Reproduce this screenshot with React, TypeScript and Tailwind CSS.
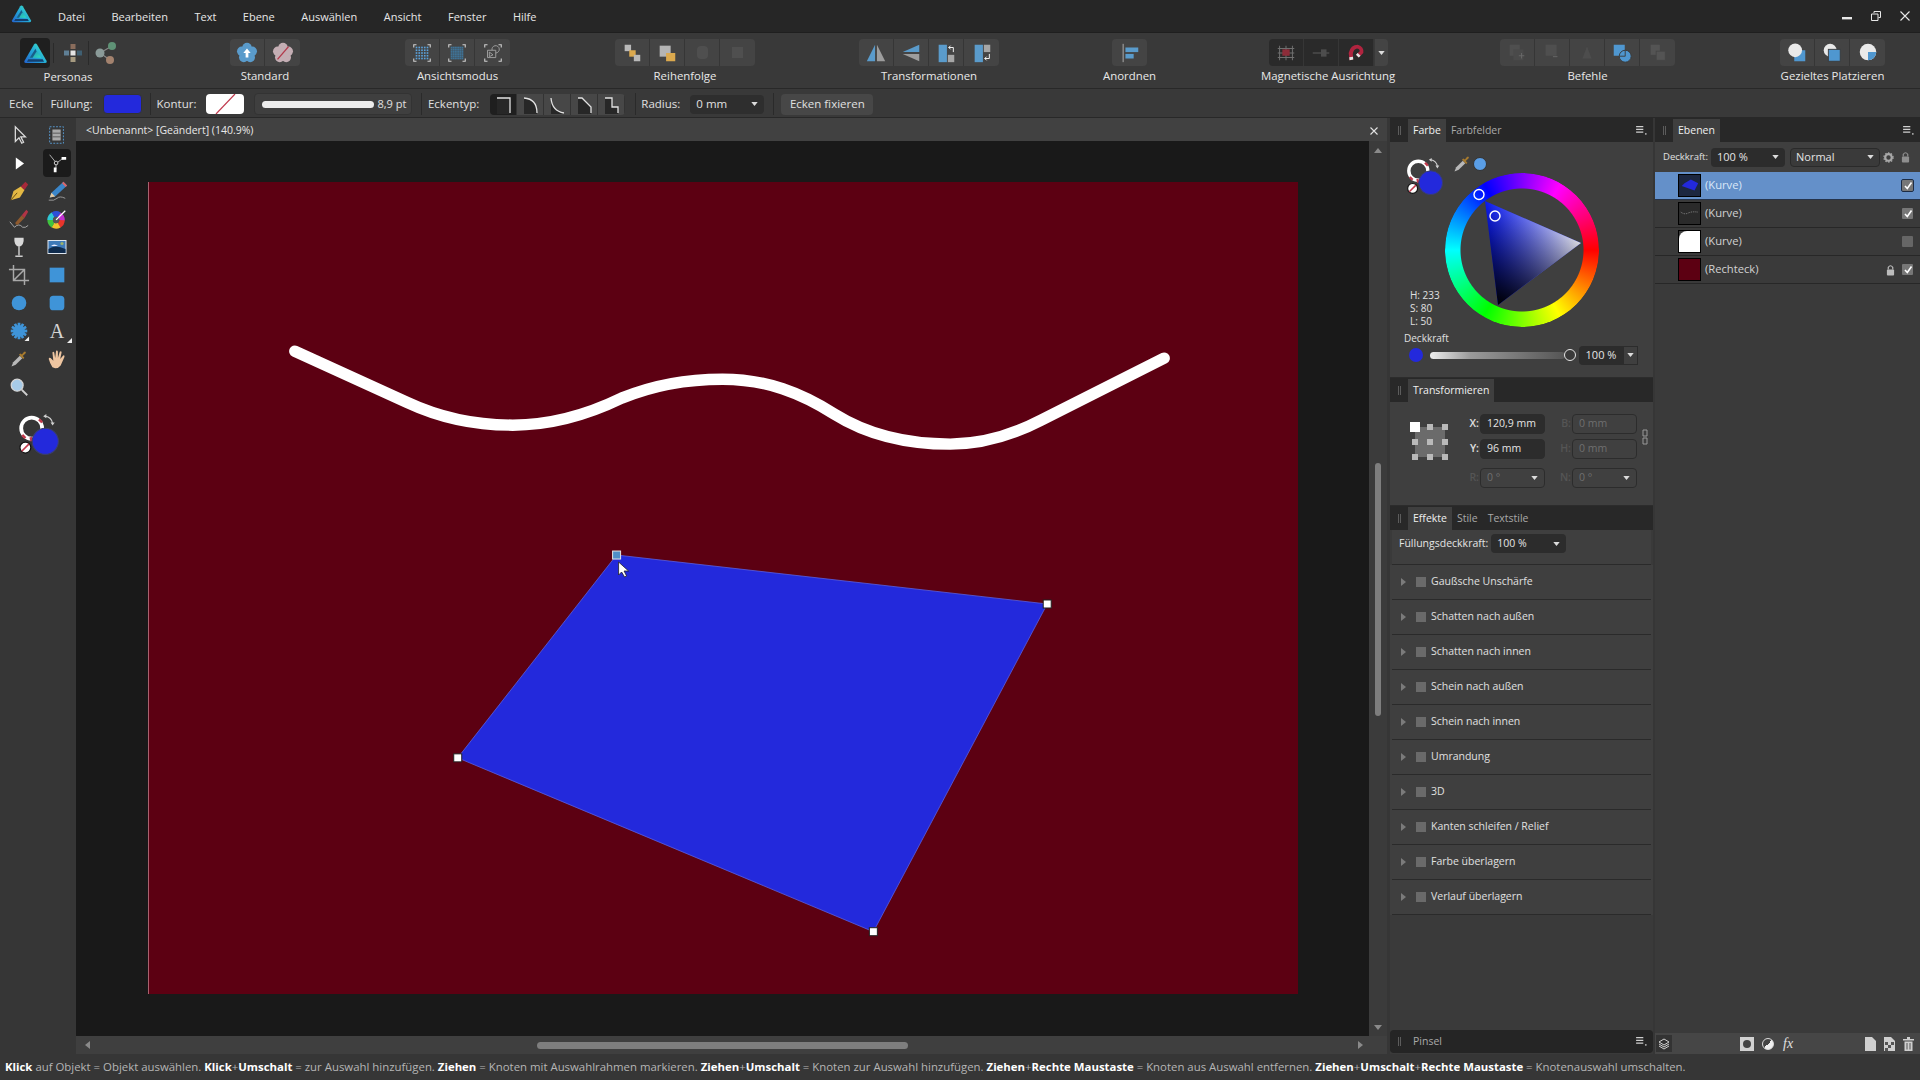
import React from "react";

const Flower = ({ fill, children }: { fill: string; children?: React.ReactNode }) => (
  <svg viewBox="0 0 24 24" className="w-[22px] h-[22px]">
    {[0, 72, 144, 216, 288].map((a) => (
      <circle key={a} cx={12 + 6 * Math.sin((a * Math.PI) / 180)} cy={12 - 6 * Math.cos((a * Math.PI) / 180)} r="5.2" fill={fill} />
    ))}
    <circle cx="12" cy="12" r="6" fill={fill} />
    {children}
  </svg>
);

const Logo = ({ size }: { size: string }) => (
  <svg viewBox="0 0 24 22" className={size}>
    <defs>
      <linearGradient id="lg1" x1="0" y1="1" x2="1" y2="0.2">
        <stop offset="0" stopColor="#2463cf" />
        <stop offset=".55" stopColor="#23a9d8" />
        <stop offset="1" stopColor="#3fe8c4" />
      </linearGradient>
      <linearGradient id="lg2" x1="0" y1="0" x2="1" y2="1">
        <stop offset="0" stopColor="#1d7fc0" />
        <stop offset="1" stopColor="#2fe0b8" />
      </linearGradient>
    </defs>
    <path d="M12 .5 Q13 .5 13.6 1.5 L23.5 18.5 Q24.4 21 22 21 L2 21 Q-.4 21 .5 18.5 L10.4 1.5 Q11 .5 12 .5Z" fill="url(#lg1)" />
    <path d="M12 6 L18 15.5 L6 15.5 Z" fill="url(#lg2)" />
    <path d="M4.5 17 L19.5 17 L21 19.6 L3 19.6 Z" fill="#14406f" />
    <path d="M12 6 L6 15.5 L9 15.5 L13 9Z" fill="#123f73" opacity=".7" />
  </svg>
);

const Ic = ({ children, cls = "w-[22px] h-[22px]" }: { children: React.ReactNode; cls?: string }) => (
  <svg viewBox="0 0 24 24" className={cls}>
    {children}
  </svg>
);

const Corners = ({ children }: { children: React.ReactNode }) => (
  <Ic>
    <path d="M3 6V3H6M18 3H21V6M21 18V21H18M6 21H3V18" fill="none" stroke="#cfcfcf" strokeWidth="1.2" />
    {children}
  </Ic>
);

const Dots = ({ color, step }: { color: string; step: number }) => {
  const d: React.ReactNode[] = [];
  for (let x = 6; x <= 18; x += step) for (let y = 6; y <= 18; y += step) d.push(<rect key={`${x}-${y}`} x={x - 0.9} y={y - 0.9} width="1.8" height="1.8" fill={color} />);
  return <>{d}</>;
};

const Btn = ({ children, dark }: { children?: React.ReactNode; dark?: boolean }) => (
  <div className={`w-[35px] h-[27px] flex items-center justify-center border-r border-[#363636] last:border-r-0 ${dark ? "bg-[#2a2a2a]" : "bg-[#444444]"}`}>
    {children}
  </div>
);

const Group = ({ label, className, children }: { label: string; className: string; children: React.ReactNode }) => (
  <div className={`flex flex-col items-center shrink-0 ${className}`}>
    <div className="flex h-[27px] mt-[6px] rounded-sm overflow-hidden">{children}</div>
    <span className="mt-[2px] leading-[16px] whitespace-nowrap text-[11.4px] text-[#e8e8e8]">{label}</span>
  </div>
);

const Sep = ({ className }: { className: string }) => <div className={`w-px h-[22px] bg-[#2a2a2a] shrink-0 ${className}`} />;

const Caret = ({ className = "" }: { className?: string }) => (
  <svg viewBox="0 0 8 5" className={`w-[7px] h-[4px] shrink-0 ${className}`}>
    <path d="M0 0H8L4 5Z" fill="#dcdcdc" />
  </svg>
);

const PanelMenu = () => (
  <svg viewBox="0 0 12 10" className="w-[11px] h-[9px]">
    <path d="M0 0H8V1.5H0ZM0 3H8V4.5H0ZM0 6H8V7.5H0Z" fill="#cfcfcf" />
    <rect x="10" y="8" width="1.6" height="1.6" fill="#cfcfcf" />
  </svg>
);

const Grip = () => <div className="w-[3px] h-[9px] border-x border-[#5c5c5c] shrink-0" />;

const PanelHead = ({ tabs, menu, active = 0, className = "" }: { tabs: string[]; menu?: boolean; active?: number; className?: string }) => (
  <div className={`flex items-end h-[24px] bg-[#282828] shrink-0 text-[10.5px] ${className}`}>
    <div className="w-[18px] h-full flex items-center justify-center">
      <Grip />
    </div>
    {tabs.map((t, i) => (
      <div key={t} className={`h-[23px] px-[5px] flex items-center ${i === active ? "bg-[#3f3f3f] text-[#f0f0f0]" : "text-[#a9a9a9]"}`}>
        {t}
      </div>
    ))}
    {menu && (
      <div className="ml-auto mr-[6px] self-center">
        <PanelMenu />
      </div>
    )}
  </div>
);

const ColorChip = ({ cls }: { cls: string }) => (
  <svg viewBox="0 0 42 42" className={cls}>
    <circle cx="14" cy="14.5" r="10" fill="none" stroke="#fff" strokeWidth="3.6" />
    <path d="M21 6 L24 9 M5 21 L8 24 M13 23 L14 27" stroke="#c23a4c" strokeWidth="2.4" />
    <path d="M27 3 Q33 4 34 10" fill="none" stroke="#cfcfcf" strokeWidth="1.1" />
    <path d="M25 3 L28 1 L28 5ZM34 12 L32 9 L36 9Z" fill="#cfcfcf" />
    <circle cx="27" cy="27" r="12.5" fill="#2329dc" stroke="#3b3f6a" strokeWidth="1" />
    <circle cx="8" cy="33" r="5.2" fill="#fff" stroke="#111" strokeWidth="1.2" />
    <path d="M4.5 36.5 L11.5 29.5" stroke="#c23a4c" strokeWidth="1.6" />
  </svg>
);

const Dropper = ({ cls = "w-[20px] h-[20px]" }: { cls?: string }) => (
  <Ic cls={cls}>
    <path d="M3 21 L5 16 L13 8 L16 11 L8 19 Z" fill="#b8b8b8" />
    <path d="M12 7 L17 12 L18.5 10.5 L16.5 8.5 L20 5 Q21 3 19 3 Q18 3 15.5 6.5 L13.5 5.5 Z" fill="#a87b2e" />
  </Ic>
);

const Mini = ({ x, y }: { x: number; y: number }) => <path d={`M${x} ${y} h5 v-5 Z`} fill="#eee" />;

const wheelSegs = ["#e8352b", "#f2c12e", "#3fc43f", "#2fc7d6", "#2d4fd8", "#c22fd0"];

const tools: React.ReactNode[] = [
  <Ic key="a"><path d="M8 3 L8 19 L12 15 L15 21 L17 20 L14 14 L19 14 Z" fill="none" stroke="#dcdcdc" strokeWidth="1.4" /></Ic>,
  <Ic key="b"><rect x="4" y="3" width="15" height="18" fill="none" stroke="#5a9ed8" strokeWidth="1" strokeDasharray="2 1.5" /><rect x="7" y="6" width="9" height="12" fill="#a9a9a9" /><path d="M7 10H16M7 14H16" stroke="#555" /></Ic>,
  <Ic key="c"><path d="M8.5 6 V19 L17.5 12.5 Z" fill="#fff" /></Ic>,
  <Ic key="d"><circle cx="11" cy="12" r="2" fill="none" stroke="#ddd" /><path d="M4 3 L10 10.5 M13 11 Q17 7 21 7 M11 14 Q11 18 10 21" stroke="#bbb" strokeWidth="1" fill="none" /><path d="M17 5.5h5v3h-5zM8.5 17h3v5h-3z" fill="#fff" /></Ic>,
  <Ic key="e"><path d="M3 22 L6 12 L14 7 L18 11 L13 19 Z" fill="#e3b843" /><path d="M14 7 L19 2 L22 5 L18 11 Z" fill="#a6293a" /><path d="M3 22 L10 14" stroke="#5c4410" /></Ic>,
  <Ic key="f"><path d="M4 19 L6 14 L19 2 L23 6 L10 18 Z" fill="#3b86c9" /><path d="M19 2 L23 6 L21.5 7.5 L17.5 3.5 Z" fill="#d66" /><path d="M4 19 L6 14 L10 18 Z" fill="#e4c9a0" /><path d="M3 22 Q9 23 12 20 T21 20" fill="none" stroke="#aaa" strokeWidth=".9" /></Ic>,
  <Ic key="g"><path d="M2 15 L7 21 Q12 16 16 21 Q19 22 22 19" fill="none" stroke="#bbb" strokeWidth=".9" /><path d="M8 16 L15 8 L18 11 L11 18 Q8 19 8 16Z" fill="#8f5a2e" /><path d="M15 8 L20 2 L22 4 L18 11Z" fill="#b23445" /></Ic>,
  <Ic key="h">{wheelSegs.map((c, i) => (<circle key={c} cx="11" cy="13" r="6.5" fill="none" stroke={c} strokeWidth="6" strokeDasharray="6.8 34" transform={`rotate(${i * 60} 11 13)`} />))}<circle cx="11" cy="13" r="3.5" fill="#555" /><path d="M11 13 L21 3" stroke="#fff" strokeWidth="1.4" /></Ic>,
  <Ic key="i"><path d="M7 2 H17 Q18 10 12 12 Q6 10 7 2Z" fill="#d8d8d8" /><path d="M12 12 V21 M8 22 H16" stroke="#ccc" strokeWidth="1.6" /></Ic>,
  <Ic key="j" cls="w-[24px] h-[24px]"><rect x="2.5" y="5" width="19" height="14" fill="#dfe6ee" /><rect x="3.5" y="6" width="17" height="12" fill="#3f7ab8" /><path d="M3.5 14 Q10 9 20.5 14 V18 H3.5Z" fill="#0f2b4d" /><circle cx="17" cy="8.5" r="1.6" fill="#9bb26a" /><path d="M6 11 Q9 8 13 11Z" fill="#eef" /></Ic>,
  <Ic key="k"><path d="M6 1 V18 H23 M1 6 H18 V23 M6 18 L18 6" fill="none" stroke="#a9a9a9" strokeWidth="1.6" /></Ic>,
  <Ic key="l"><rect x="4" y="4" width="16" height="16" fill="#3f94d8" /></Ic>,
  <Ic key="m"><circle cx="12" cy="12" r="8" fill="#3f94d8" /></Ic>,
  <Ic key="n"><rect x="4" y="4" width="16" height="16" rx="4" fill="#3f94d8" /></Ic>,
  <Ic key="o">{[0, 30, 60, 90, 120, 150].map((a) => (<rect key={a} x="10.5" y="3" width="3" height="18" fill="#3f94d8" transform={`rotate(${a} 12 12)`} />))}<circle cx="12" cy="12" r="6.5" fill="#3f94d8" /><Mini x={18} y={23} /></Ic>,
  <div key="p" className="relative w-[24px] h-[24px] flex items-center justify-center font-['Liberation_Serif',serif] text-[20px] leading-none text-[#d4d4d4]">
    A
    <svg viewBox="0 0 6 6" className="absolute right-[-3px] bottom-0 w-[5px] h-[5px]"><path d="M0 6H6V0Z" fill="#eee" /></svg>
  </div>,
  <Dropper key="q" />,
  <Ic key="r"><path d="M7 21 Q4 16 3 12 Q3 10 5 11 L8 14 L7 5 Q8 3 9 5 L10 11 L11 3 Q12.5 2 13 4 L13 11 L15 4 Q17 3 17 5 L15.5 12 L19 8 Q21 8 20 10 L16 19 Q14 22 10 22Z" fill="#eec5a0" /></Ic>,
  <Ic key="s"><circle cx="10" cy="10" r="6.5" fill="#a7cbe8" stroke="#d5d5d5" strokeWidth="1.4" /><path d="M15 15 L21 21" stroke="#cfcfcf" strokeWidth="2" /></Ic>,
];

const menus = ["Datei", "Bearbeiten", "Text", "Ebene", "Auswählen", "Ansicht", "Fenster", "Hilfe"];
const effects = ["Gaußsche Unschärfe", "Schatten nach außen", "Schatten nach innen", "Schein nach außen", "Schein nach innen", "Umrandung", "3D", "Kanten schleifen / Relief", "Farbe überlagern", "Verlauf überlagern"];

const Input = ({ value, dim, width, caret, label }: { value: string; dim?: boolean; width: string; caret?: boolean; label: string }) => (
  <div className="flex items-center">
    <span className={`w-[13px] text-right font-semibold ${dim ? "text-[#555]" : "text-[#e0e0e0]"}`}>{label}</span>
    <div className={`ml-[1px] h-[20px] ${width} flex items-center justify-between whitespace-nowrap px-[6px] rounded-sm border border-[#2c2c2c] ${dim ? "bg-[#404040] text-[#6f6f6f]" : "bg-[#2c2c2c] text-[#e4e4e4]"}`}>
      {value}
      {caret && <Caret />}
    </div>
  </div>
);

const Check = ({ on = true, boxed }: { on?: boolean; boxed?: boolean }) => (
  <div className={`w-[11px] h-[11px] rounded-[1px] flex items-center justify-center shrink-0 ${on ? "bg-[#777]" : "bg-[#666]"} ${boxed ? "outline outline-1 outline-[#1d2c44]" : ""}`}>
    {on && (
      <svg viewBox="0 0 10 10" className="w-[10px] h-[10px]">
        <path d="M2 5 L4.3 7.5 L8.5 1.5" fill="none" stroke="#fff" strokeWidth="1.6" />
      </svg>
    )}
  </div>
);

const Lock = ({ color = "#bcbcbc" }: { color?: string }) => (
  <svg viewBox="0 0 10 13" className="w-[9px] h-[12px] shrink-0">
    <path d="M2.5 6 V3.5 Q5 0 7.5 3.5 V6" fill="none" stroke={color} strokeWidth="1.3" />
    <rect x="1" y="6" width="8" height="6.5" rx="1" fill={color} />
  </svg>
);

const Layer = ({ name, thumb, selected, check, locked }: { name: string; thumb: React.ReactNode; selected?: boolean; check: boolean; locked?: boolean }) => (
  <div className={`h-[28px] flex items-center pl-[23px] pr-[7px] border-b ${selected ? "bg-[#6490c9] border-[#25344c] text-[#dbe8f8]" : "border-[#272727] text-[#d2d2d2]"}`}>
    <div className="w-[23px] h-[23px] border border-black shrink-0 overflow-hidden">{thumb}</div>
    <span className="ml-[4px] text-[11.2px]">{name}</span>
    {locked && (
      <span className="ml-auto mr-[7px]">
        <Lock />
      </span>
    )}
    <span className={locked ? "" : "ml-auto"}>
      <Check on={check} boxed={selected} />
    </span>
  </div>
);

export default function App() {
  return (
    <div className="w-[1920px] h-[1080px] flex flex-col overflow-hidden bg-[#363636] text-[11px] text-[#e4e4e4] font-['Open_Sans',sans-serif]">
      {/* title bar */}
      <div className="h-[33px] shrink-0 flex items-center bg-[#262626] border-b border-[#1f1f1f]">
        <div className="ml-[11px] w-[21px]">
          <Logo size="w-[21px] h-[18px] -mt-[5px]" />
        </div>
        <div className="ml-[26px] pt-[3px] flex gap-[26.5px] text-[#e6e6e6]">
          {menus.map((m) => (
            <span key={m}>{m}</span>
          ))}
        </div>
        <div className="ml-auto flex items-center gap-[19px] pr-[10px]">
          <svg viewBox="0 0 10 10" className="w-[10px] h-[10px]"><rect x="0" y="6" width="10" height="2.4" fill="#e8e8e8" /></svg>
          <svg viewBox="0 0 10 10" className="w-[10px] h-[10px]"><path d="M3 2V.5H9.5V6.5H7.5M.5 3H7V9.5H.5Z" fill="none" stroke="#e8e8e8" /></svg>
          <svg viewBox="0 0 10 10" className="w-[10px] h-[10px]"><path d="M.5 .5L9.5 9.5M9.5 .5L.5 9.5" stroke="#e8e8e8" strokeWidth="1.1" /></svg>
        </div>
      </div>

      {/* toolbar */}
      <div className="h-[56px] shrink-0 flex bg-[#393939] border-b border-[#282828]">
        <div className="flex flex-col shrink-0 ml-[20px] w-[96px]">
          <div className="flex items-center h-[30px] mt-[5px]">
            <div className="w-[30px] h-[30px] bg-[#1f1f1f] rounded-sm flex items-center justify-center shrink-0">
              <Logo size="w-[23px] h-[21px]" />
            </div>
            <div className="w-[38px] flex justify-center shrink-0 border-l border-[#2a2a2a] ml-[3px] -mr-[3px]">
              <svg viewBox="0 0 20 20" className="w-[20px] h-[20px]">
                <rect x="7.5" y="1" width="5" height="5" fill="#8a6d5c" /><rect x="1" y="7.5" width="5" height="5" fill="#5f7f95" /><rect x="7.5" y="7.5" width="5" height="5" fill="#e4e4e4" /><rect x="14" y="7.5" width="5" height="5" fill="#3f5f72" /><rect x="7.5" y="14" width="5" height="5" fill="#a69a80" />
              </svg>
            </div>
            <div className="w-[34px] flex justify-center shrink-0 border-l border-[#2a2a2a]">
              <svg viewBox="0 0 24 24" className="w-[24px] h-[24px]">
                <path d="M6 12 L18 5 M6 12 L16 19" stroke="#888" strokeWidth="1.2" /><circle cx="6" cy="12" r="4.5" fill="#8a9a98" /><circle cx="18" cy="5" r="4" fill="#5f9276" /><circle cx="16" cy="19" r="4" fill="#a3826e" />
              </svg>
            </div>
          </div>
          <span className="mt-[1px] leading-[16px] self-center text-[11.4px] text-[#e8e8e8]">Personas</span>
        </div>

        <Group label="Standard" className="ml-[114px] w-[70px]">
          <Btn><Flower fill="#5a9bcb"><path d="M12 7 L16 12 H13.5 V17 H10.5 V12 H8 Z" fill="#fff" /></Flower></Btn>
          <Btn><Flower fill="#c4aeb4"><path d="M6 19 L18 5" stroke="#b2394b" strokeWidth="1.5" /></Flower></Btn>
        </Group>

        <Group label="Ansichtsmodus" className="ml-[105px] w-[105px]">
          <Btn><Corners><Dots color="#5aa2dc" step={3} /></Corners></Btn>
          <Btn><Corners><Dots color="#3f7397" step={2} /></Corners></Btn>
          <Btn>
            <Corners><path d="M6 17 V9 H15 V17Z M11 9 A4 4 0 1 1 15 12 M8 11 L12 14 L8 16Z" fill="none" stroke="#a3a3a3" /></Corners>
          </Btn>
        </Group>

        <Group label="Reihenfolge" className="ml-[105px] w-[140px]">
          <Btn><Ic><rect x="4" y="3" width="7" height="7" fill="#b9b9b9" /><rect x="9" y="9" width="7" height="7" fill="#dba94e" /><rect x="14" y="14" width="7" height="7" fill="#b9b9b9" /></Ic></Btn>
          <Btn><Ic><rect x="4" y="4" width="12" height="12" fill="#b4b4b4" /><rect x="11" y="12" width="10" height="9" fill="#dba94e" /></Ic></Btn>
          <Btn><div className="w-[11px] h-[13px] bg-[#4f4f4f] rounded-sm" /></Btn>
          <Btn><div className="w-[11px] h-[11px] bg-[#4f4f4f]" /></Btn>
        </Group>

        <Group label="Transformationen" className="ml-[104px] w-[140px]">
          <Btn><Ic><path d="M11 3 V21 H2Z" fill="#5a9bcb" /><path d="M13 3 V21 H22Z" fill="#9d9d9d" /></Ic></Btn>
          <Btn><Ic><path d="M21 3 V11 H3Z" fill="#5a9bcb" /><path d="M21 21 V13 H3Z" fill="#9d9d9d" /></Ic></Btn>
          <Btn><Ic><rect x="4" y="3" width="9" height="19" fill="#5a9bcb" /><rect x="14" y="14" width="7" height="8" fill="#a6a6a6" /><path d="M20 11 V6 H15 M17 4 L15 6 L17 8" fill="none" stroke="#fff" /></Ic></Btn>
          <Btn><Ic><rect x="4" y="3" width="9" height="19" fill="#5a9bcb" /><rect x="14" y="3" width="7" height="8" fill="#a6a6a6" /><path d="M20 13 V18 H15 M17 16 L15 18 L17 20" fill="none" stroke="#fff" /></Ic></Btn>
        </Group>

        <Group label="Anordnen" className="ml-[113px] w-[35px]">
          <Btn><Ic><path d="M4.5 2 V22" stroke="#b4b4b4" /><rect x="7" y="6" width="14" height="5" fill="#5a9bcb" /><rect x="7" y="13" width="9" height="5" fill="#5a9bcb" /></Ic></Btn>
        </Group>

        <Group label="Magnetische Ausrichtung" className="ml-[122px] w-[118px]">
          <Btn dark><Ic><path d="M5 4V20M12 4V20M19 4V20M3 7H21M3 12H21M3 17H21" stroke="#6f6f6f" strokeWidth="1.1" /><rect x="8" y="8" width="8" height="7" fill="#8d2c39" /></Ic></Btn>
          <Btn dark><Ic><path d="M3 12H21" stroke="#4d4d4d" strokeWidth="1.6" /><rect x="12" y="8" width="6" height="8" fill="#4d4d4d" /></Ic></Btn>
          <Btn dark><Ic><path d="M5 20 L4 12 Q6 3 14 3 Q21 5 20 12 L15 17 L12 14 L16 10 Q16 7 13 7 Q9 8 8.5 13 L9 19Z" fill="#b0243f" /><path d="M5 20 L9 19 L8.7 16 L4.6 16.5Z M15 17 L12 14 L13.8 12 L17 15Z" fill="#e5e5e5" /></Ic></Btn>
          <div className="w-[13px] bg-[#444444] ml-[1px] flex items-center justify-center"><Caret /></div>
        </Group>

        <Group label="Befehle" className="ml-[113px] w-[175px]">
          <Btn><Ic><rect x="4" y="3" width="11" height="12" fill="#4f4f4f" /><rect x="8" y="8" width="11" height="12" fill="#4a4a4a" /><path d="M14 15H20M17 12V18" stroke="#6a6a6a" /></Ic></Btn>
          <Btn><Ic><rect x="5" y="3" width="12" height="12" fill="#4f4f4f" /><path d="M13 16H18" stroke="#6a6a6a" /></Ic></Btn>
          <Btn><Ic><path d="M7 18L12 5L17 18Z" fill="#4d4d4d" /></Ic></Btn>
          <Btn><Ic><rect x="3" y="3" width="12" height="12" fill="#4f97d0" /><circle cx="15.5" cy="15.5" r="6.5" fill="#4f97d0" stroke="#3a3a3a" /><path d="M15.5 9 V15.5 H9" stroke="#3a3a3a" fill="none" /></Ic></Btn>
          <Btn><Ic><rect x="4" y="3" width="10" height="11" fill="#545454" /><rect x="10" y="10" width="10" height="10" fill="#545454" stroke="#454545" /></Ic></Btn>
        </Group>

        <Group label="Gezieltes Platzieren" className="ml-[105px] w-[105px]">
          <Btn><Ic><rect x="9" y="9" width="12" height="12" fill="#4f97d0" /><circle cx="10" cy="9" r="7.5" fill="#e9e9e9" /></Ic></Btn>
          <Btn><Ic><circle cx="10" cy="9" r="7" fill="#e9e9e9" /><rect x="8" y="8" width="13" height="13" fill="#4f97d0" stroke="#3a3a3a" /></Ic></Btn>
          <Btn><Ic><circle cx="12" cy="11" r="9" fill="#e9e9e9" /><path d="M12 11 H21 A9 9 0 0 1 12 20Z" fill="#4f97d0" /></Ic></Btn>
        </Group>
      </div>

      {/* context bar */}
      <div className="h-[29px] shrink-0 flex items-center pt-[2px] bg-[#393939] border-b border-[#282828] text-[11.5px] text-[#e0e0e0]">
        <span className="ml-[9px]">Ecke</span>
        <Sep className="ml-[8px]" />
        <span className="ml-[8px]">Füllung:</span>
        <div className="ml-[10px] w-[39px] h-[20px] bg-[#2329dc] border border-[#333] rounded-sm shrink-0" />
        <Sep className="ml-[8px]" />
        <span className="ml-[6px]">Kontur:</span>
        <div className="ml-[10px] w-[38px] h-[20px] bg-white rounded-sm shrink-0">
          <svg viewBox="0 0 38 20" className="w-full h-full"><path d="M10 20 L29 0" stroke="#c0394d" strokeWidth="1.2" /></svg>
        </div>
        <div className="ml-[10px] w-[158px] h-[22px] flex items-center bg-[#3f3f3f] border border-[#333] rounded-sm shrink-0">
          <div className="ml-[7px] w-[112px] h-[7px] bg-[#ececec] rounded-full" />
          <span className="ml-[3px] text-[11px]">8,9 pt</span>
        </div>
        <Sep className="ml-[9px]" />
        <span className="ml-[5.5px]">Eckentyp:</span>
        <div className="ml-[11px] flex h-[21px] rounded-sm overflow-hidden shrink-0">
          {["M4 4H17V19", "M4 4Q17 5 17 19", "M4 4Q5 17 17 19", "M4 4H8L17 13V19", "M4 4H11V13H17V19"].map((d, i) => (
            <div key={d} className={`w-[27px] h-[21px] flex items-center justify-center border-r border-[#333] ${i === 0 ? "bg-[#1f1f1f]" : "bg-[#474747]"}`}>
              <svg viewBox="0 0 21 21" className="w-[21px] h-[21px]">
                <path d={`${d}V20H4Z`} fill="#272727" />
                <path d={d} fill="none" stroke="#e2e2e2" strokeWidth="1.3" />
              </svg>
            </div>
          ))}
        </div>
        <Sep className="ml-[10px]" />
        <span className="ml-[5px]">Radius:</span>
        <div className="ml-[10px] w-[74px] h-[19px] flex items-center justify-between px-[6px] bg-[#2e2e2e] rounded-sm shrink-0">
          0 mm
          <Caret />
        </div>
        <Sep className="ml-[9px]" />
        <div className="ml-[7px] w-[92px] h-[21px] flex items-center justify-center bg-[#474747] rounded-sm">Ecken fixieren</div>
      </div>

      {/* main */}
      <div className="flex-1 flex min-h-0">
        {/* tools */}
        <div className="w-[76px] shrink-0 pt-[3px]">
          <div className="grid grid-cols-[38px_38px] auto-rows-[28px]">
            {tools.map((t, i) => (
              <div key={i} className="flex items-center justify-center">
                <div className={`w-[28px] h-[28px] flex items-center justify-center rounded-sm ${i === 3 ? "bg-[#1b1b1b]" : ""}`}>{t}</div>
              </div>
            ))}
          </div>
          <div className="mt-[12px] ml-[17px]">
            <ColorChip cls="w-[44px] h-[44px]" />
          </div>
        </div>

        {/* document */}
        <div className="w-[1311px] shrink-0 flex flex-col">
          <div className="h-[23px] shrink-0 flex items-center justify-between bg-[#414141] pt-[2px] pl-[10px] pr-[9px] text-[10.5px] text-[#e8e8e8]">
            <span>&lt;Unbenannt&gt; [Geändert] (140.9%)</span>
            <svg viewBox="0 0 8 8" className="w-[8px] h-[8px]"><path d="M.5 .5L7.5 7.5M7.5 .5L.5 7.5" stroke="#e2e2e2" strokeWidth="1.1" /></svg>
          </div>
          <div className="flex-1 flex min-h-0">
            <div className="flex-1 bg-[#191919] pt-[41px] pl-[72px]">
              <div className="w-[1150px] h-[812px] bg-[#5c0012] border-l border-[#a8616f]">
                <svg viewBox="0 0 1150 812" className="w-full h-full">
                  <path d="M146 169 L258 220 C290 235 328 243 364 243 C402 243 440 232 473 216 C502 204 537 197 574 197 C618 197 653 211 686 232 C718 252 758 262 802 262 C834 262 864 253 893 238 L1016 176" fill="none" stroke="#fff" strokeWidth="11.5" strokeLinecap="round" />
                  <polygon points="468,373 899,422 725,750 309,576" fill="#2329dc" stroke="#5a60e0" strokeWidth=".8" />
                  <rect x="464" y="369" width="8" height="8" fill="#4f8fc8" stroke="#e6e6e6" />
                  <rect x="895" y="418" width="8" height="8" fill="#fff" stroke="#222" />
                  <rect x="721" y="746" width="8" height="8" fill="#fff" stroke="#222" />
                  <rect x="305" y="572" width="8" height="8" fill="#fff" stroke="#222" />
                  <path d="M470 380 V393 L473 390 L476 395 L478 394 L475.5 389 L480 389Z" fill="#fff" stroke="#222" strokeWidth=".8" />
                </svg>
              </div>
            </div>
            <div className="w-[18px] shrink-0 flex flex-col items-center bg-[#3b3b3b] pt-[7px] pb-[6px]">
              <svg viewBox="0 0 8 5" className="w-[8px] h-[5px]"><path d="M4 0L8 5H0Z" fill="#8a8a8a" /></svg>
              <div className="mt-[310px] w-[6px] h-[253px] bg-[#7e7e7e] rounded-full" />
              <svg viewBox="0 0 8 5" className="mt-auto w-[8px] h-[5px]"><path d="M0 0H8L4 5Z" fill="#8a8a8a" /></svg>
            </div>
          </div>
          <div className="h-[18px] shrink-0 flex items-center bg-[#3f3f3f]">
            <svg viewBox="0 0 5 8" className="ml-[9px] w-[5px] h-[8px]"><path d="M5 0V8L0 4Z" fill="#8a8a8a" /></svg>
            <div className="ml-[447px] w-[371px] h-[7px] bg-[#7e7e7e] rounded-full" />
            <svg viewBox="0 0 5 8" className="ml-auto mr-[24px] w-[5px] h-[8px]"><path d="M0 0V8L5 4Z" fill="#8a8a8a" /></svg>
          </div>
        </div>

        {/* middle panels */}
        <div className="ml-[3px] w-[263px] shrink-0 flex flex-col">
          <PanelHead tabs={["Farbe", "Farbfelder"]} menu />
          <div className="h-[236px] shrink-0 bg-[#3f3f3f] border-b border-[#2c2c2c]">
            <div className="flex h-[185px] pt-[13px]">
              <div className="w-[55px] flex flex-col justify-between">
                <div className="ml-[15px] mt-[2px]">
                  <ColorChip cls="w-[40px] h-[40px]" />
                </div>
                <div className="ml-[20px] mb-[-1px] text-[10px] leading-[13px] text-[#e0e0e0]">
                  <div>H: 233</div>
                  <div>S: 80</div>
                  <div>L: 50</div>
                </div>
              </div>
              <div className="w-[154px]">
                <div className="flex items-center h-[18px] pl-[7px] gap-[1px]">
                  <Dropper cls="w-[20px] h-[20px]" />
                  <div className="w-[14px] h-[14px] rounded-full bg-[#5a9ee6] border border-[#333]" />
                </div>
                <div className="relative w-[154px] h-[154px]">
                  <div className="w-full h-full rounded-full bg-[conic-gradient(from_90deg,#f00,#ff0,#0f0,#0ff,#00f,#f0f,#f00)] [mask-image:radial-gradient(circle,transparent_61px,#000_62px)]" />
                  <svg viewBox="0 0 154 154" className="absolute inset-0 w-full h-full">
                    <defs>
                      <linearGradient id="tw" gradientUnits="userSpaceOnUse" x1="136" y1="70" x2="46.5" y2="80">
                        <stop offset="0" stopColor="#ddd" />
                        <stop offset="1" stopColor="#ddd" stopOpacity="0" />
                      </linearGradient>
                      <linearGradient id="tb" gradientUnits="userSpaceOnUse" x1="53" y1="132" x2="88" y2="49">
                        <stop offset="0" stopColor="#000" />
                        <stop offset="1" stopColor="#000" stopOpacity="0" />
                      </linearGradient>
                    </defs>
                    <polygon points="40,28 136,70 53,132" fill="#0b1bf0" />
                    <polygon points="40,28 136,70 53,132" fill="url(#tw)" />
                    <polygon points="40,28 136,70 53,132" fill="url(#tb)" />
                    <circle cx="34" cy="21.5" r="5" fill="none" stroke="#fff" strokeWidth="1.4" />
                    <circle cx="50" cy="43" r="5" fill="none" stroke="#fff" strokeWidth="1.4" />
                  </svg>
                </div>
              </div>
            </div>
            <div className="ml-[14px] mt-[5px] text-[10px] leading-[13px] text-[#e0e0e0]">Deckkraft</div>
            <div className="flex items-center h-[18px] mt-[1px]">
              <div className="ml-[19px] w-[14px] h-[14px] rounded-full bg-[#2329dc]" />
              <div className="ml-[7px] w-[135px] h-[7px] rounded-full bg-[linear-gradient(90deg,#eeeeee,#9a9a9a_30%,#555555)]" />
              <div className="w-[12px] h-[12px] rounded-full border border-[#e6e6e6] bg-[#3a3a3a] -ml-[1px] shrink-0" />
              <div className="ml-[3px] w-[59px] h-[19px] flex items-center bg-[#2c2c2c] rounded-sm shrink-0">
                <span className="w-[44px] text-center">100 %</span>
                <div className="w-[15px] h-full flex items-center justify-center bg-[#3f3f3f] border border-[#2c2c2c]"><Caret /></div>
              </div>
            </div>
          </div>

          <PanelHead tabs={["Transformieren"]} />
          <div className="h-[104px] shrink-0 bg-[#3f3f3f] border-b border-[#2c2c2c] flex pt-[12px] text-[10.5px]">
            <div className="ml-[25px] w-[30px] h-[30px] mt-[13px] relative bg-[#6b6b6b] shrink-0">
              <div className="absolute -inset-[7.5px] grid grid-cols-3 grid-rows-3 place-items-center">
                {[0, 1, 2, 3, 4, 5, 6, 7, 8].map((i) => (
                  <div key={i} className={i === 0 ? "w-[10px] h-[10px] bg-white" : "w-[6px] h-[6px] bg-[#b9b9b9]"} />
                ))}
              </div>
            </div>
            <div className="ml-[21px] flex flex-col gap-[5px]">
              <div className="flex gap-[13px] items-center">
                <Input label="X:" value="120,9 mm" width="w-[65px]" />
                <Input label="B:" dim value="0 mm" width="w-[65px]" />
              </div>
              <div className="flex gap-[13px] items-center relative">
                <Input label="Y:" value="96 mm" width="w-[65px]" />
                <Input label="H:" dim value="0 mm" width="w-[65px]" />
                <svg viewBox="0 0 6 16" className="absolute -right-[11px] -top-[10px] w-[6px] h-[16px]"><path d="M1 1H5V7H1ZM1 9H5V15H1Z" fill="none" stroke="#9a9a9a" /></svg>
              </div>
              <div className="flex gap-[13px] items-center mt-[4px]">
                <Input label="R:" dim caret value="0 °" width="w-[65px]" />
                <Input label="N:" dim caret value="0 °" width="w-[65px]" />
              </div>
            </div>
          </div>

          <PanelHead tabs={["Effekte", "Stile", "Textstile"]} />
          <div className="flex-1 flex flex-col bg-[#3a3a3a] min-h-0 text-[10.5px]">
            <div className="h-[35px] shrink-0 flex items-center pl-[7px] pb-[7px] border-b border-[#2a2a2a] mx-[2px] bg-[#3f3f3f] text-[#e4e4e4]">
              Füllungsdeckkraft:
              <div className="ml-[3px] w-[75px] h-[19px] flex items-center justify-between px-[6px] bg-[#2c2c2c] rounded-sm">
                100 %
                <Caret />
              </div>
            </div>
            <div className="h-[350px] shrink-0 bg-[#3f3f3f]">
              {effects.map((e) => (
                <div key={e} className="h-[35px] mx-[2px] flex items-center pl-[9px] border-b border-[#2a2a2a] text-[#e0e0e0]">
                  <svg viewBox="0 0 5 8" className="w-[5px] h-[8px] shrink-0"><path d="M0 0L5 4L0 8Z" fill="#7b7b7b" /></svg>
                  <div className="ml-[10px] w-[10px] h-[10px] bg-[#6a6a6a] shrink-0" />
                  <span className="ml-[5px]">{e}</span>
                </div>
              ))}
            </div>
            <div className="flex-1 bg-[#3a3a3a]" />
            <div className="h-[23px] mt-[3px] mb-[1px] shrink-0 flex items-center bg-[#252525] text-[#a9a9a9] rounded-sm">
              <div className="w-[18px] flex justify-center"><Grip /></div>
              <span className="ml-[5px]">Pinsel</span>
              <div className="ml-auto mr-[6px]"><PanelMenu /></div>
            </div>
          </div>
        </div>

        {/* layers */}
        <div className="ml-[2px] flex-1 flex flex-col">
          <PanelHead tabs={["Ebenen"]} menu />
          <div className="flex-1 flex flex-col bg-[#3a3a3a]">
            <div className="h-[30px] shrink-0 flex items-center pl-[8px] bg-[#3f3f3f]">
              <span className="text-[9.5px] w-[48px] text-[#e0e0e0]">Deckkraft:</span>
              <div className="w-[74px] h-[19px] flex items-center justify-between px-[6px] bg-[#2c2c2c] rounded-sm">100 %<Caret /></div>
              <div className="ml-[5px] w-[90px] h-[19px] flex items-center justify-between px-[5px] bg-[#3a3a3a] border border-[#2a2a2a] rounded-sm">Normal<Caret /></div>
              <svg viewBox="0 0 12 12" className="ml-[3px] w-[11px] h-[11px] shrink-0"><circle cx="6" cy="6" r="3.6" fill="none" stroke="#a9a9a9" strokeWidth="2.4" /><circle cx="6" cy="6" r="5" fill="none" stroke="#a9a9a9" strokeWidth="1.4" strokeDasharray="1.6 1.6" /></svg>
              <span className="ml-[7px]"><Lock color="#8f8f8f" /></span>
            </div>
            <Layer
              name="(Kurve)"
              selected
              check
              thumb={<svg viewBox="0 0 23 23" className="w-full h-full bg-[#1c2740]"><path d="M6 9 L13 5 L21 9 L17 17 L3 12Z" fill="#2329dc" /></svg>}
            />
            <Layer
              name="(Kurve)"
              check
              thumb={<svg viewBox="0 0 23 23" className="w-full h-full bg-[#2a2a2a]"><path d="M2 10 Q6 13 10 11 T21 10" fill="none" stroke="#bbb" strokeWidth=".7" strokeDasharray="1 1" /></svg>}
            />
            <Layer name="(Kurve)" check={false} thumb={<div className="w-full h-full bg-white rounded-tl-lg" />} />
            <Layer name="(Rechteck)" check locked thumb={<div className="w-full h-full bg-[#5c0012]" />} />
            <div className="flex-1" />
            <div className="h-[21px] shrink-0 flex items-center bg-[#464646]">
              <div className="ml-[1px] w-[16px] h-[17px] bg-[#333] flex items-center justify-center">
                <svg viewBox="0 0 12 12" className="w-[12px] h-[12px]"><path d="M6 1L11 4L6 7L1 4ZM1 6L6 9L11 6M1 8L6 11L11 8" fill="none" stroke="#cfcfcf" /></svg>
              </div>
              <div className="ml-[68px] w-[14px] h-[14px] bg-[#d2d2d2] flex items-center justify-center"><div className="w-[8px] h-[8px] rounded-full bg-[#444]" /></div>
              <div className="ml-[8px] w-[12px] h-[12px] rounded-full border border-[#ddd] bg-[linear-gradient(135deg,#444_50%,#eee_50%)]" />
              <span className="ml-[9px] font-['Liberation_Serif',serif] italic text-[14px] leading-none text-[#e0e0e0]">fx</span>
              <svg viewBox="0 0 11 14" className="ml-[72px] w-[11px] h-[14px]"><path d="M0 0H7L11 4V14H0Z" fill="#cfcfcf" /></svg>
              <svg viewBox="0 0 11 14" className="ml-[8px] w-[11px] h-[14px]"><path d="M0 0H7L11 4V14H0Z" fill="#cfcfcf" /><path d="M1 5H4V8H1ZM7 5H10V8H7ZM4 8H7V11H4ZM1 11H4V14H1Z" fill="#555" /></svg>
              <svg viewBox="0 0 11 14" className="ml-[8px] w-[11px] h-[14px]"><path d="M0 2H11V3.5H0ZM4 0H7V2H4ZM1.5 4.5H9.5V14H1.5Z" fill="#cfcfcf" /><path d="M4 6V12.5M7 6V12.5" stroke="#555" /></svg>
            </div>
          </div>
        </div>
      </div>

      {/* status bar */}
      <div className="h-[26px] shrink-0 flex items-center pl-[5px] bg-[#363636] text-[11.4px] text-[#b5b5b5] whitespace-nowrap">
        <span>
          <b className="text-white">Klick</b> auf Objekt = Objekt auswählen. <b className="text-white">Klick</b>+<b className="text-white">Umschalt</b> = zur Auswahl hinzufügen. <b className="text-white">Ziehen</b> = Knoten mit Auswahlrahmen markieren. <b className="text-white">Ziehen</b>+<b className="text-white">Umschalt</b> = Knoten zur Auswahl hinzufügen. <b className="text-white">Ziehen</b>+<b className="text-white">Rechte Maustaste</b> = Knoten aus Auswahl entfernen. <b className="text-white">Ziehen</b>+<b className="text-white">Umschalt</b>+<b className="text-white">Rechte Maustaste</b> = Knotenauswahl umschalten.
        </span>
      </div>
    </div>
  );
}
